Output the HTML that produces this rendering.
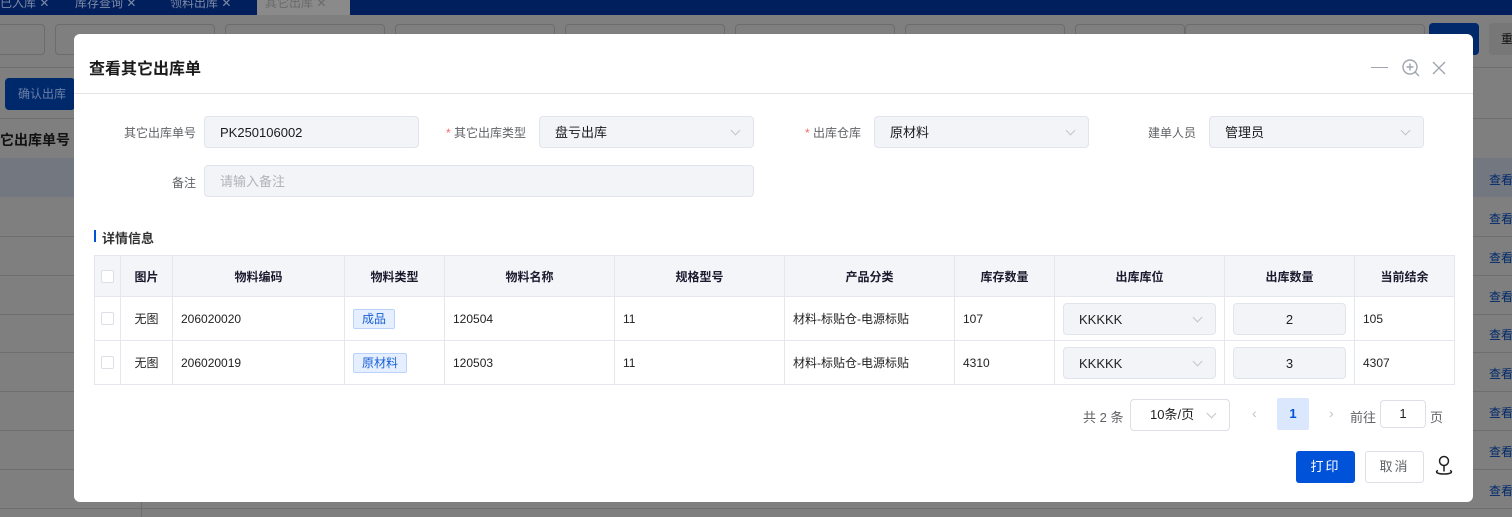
<!DOCTYPE html>
<html><head><meta charset="utf-8"><style>
*{box-sizing:border-box;margin:0;padding:0}
html{width:1512px;height:517px;overflow:hidden}
body{width:1512px;height:517px;overflow:hidden;background:#7f7f7f;font-family:"Liberation Sans","Noto Sans CJK SC",sans-serif;font-size:12px;color:#1f1f1f;position:relative}
.a{position:absolute}
.top{left:0;top:0;width:1512px;height:15px;background:#001f5c}
.tab{top:0;height:15px;color:#7d8aa8;font-size:12px;line-height:6px;overflow:hidden;white-space:nowrap}
.bgl{left:0;width:1512px;height:1px;background:#6e6e6e}
.bginp{top:24px;height:31px;border:1px solid #6c6c6c;border-radius:4px;background:#7f7f7f}
.dlg{left:74px;top:34px;width:1399px;height:468px;background:#fff;border-radius:6px}
.title{left:15px;top:21px;font-size:16px;font-weight:bold;color:#1a1a1a}
.hr{left:0;top:59px;width:1399px;height:1px;background:#e2e4e8}
.lbl{font-size:12px;color:#606266;text-align:right;width:100px}
.req{color:#f56c6c}
.inp{height:32px;background:#f3f4f8;border:1px solid #e1e4ec;border-radius:4px;font-size:13px;padding-left:15px;line-height:32px;color:#1a1a1a}
.chev{position:absolute;right:14px;top:10px;width:7px;height:7px;border-right:1px solid #c0c4cc;border-bottom:1px solid #c0c4cc;transform:rotate(45deg)}
table{border-collapse:collapse;position:absolute;left:20px;top:221px;width:1360px;table-layout:fixed}
td,th{border:1px solid #e4e7ed;font-size:12px;padding:0 8px}
th{background:#f4f5f9;height:41px;font-weight:bold;color:#1a1a2e;text-align:center}
td{height:44px}
.cb{width:13px;height:13px;border:1px solid #dcdfe6;border-radius:2px;background:#fff;margin:auto}
.tag{display:inline-block;border:1px solid #b9d3fb;background:#e6efff;color:#1760d4;font-size:12px;padding:0 8px;line-height:18px;border-radius:2px}
.cin{height:32px;background:#f3f4f8;border:1px solid #e1e4ec;border-radius:4px;position:relative;line-height:32px;font-size:13px}
.lk{left:1489px;color:#00296b;white-space:nowrap;font-size:12px}
</style></head><body>
<div class="a top"></div>
<div class="a tab" style="left:0;width:55px">已入库 ✕</div>
<div class="a tab" style="left:75px">库存查询 ✕</div>
<div class="a tab" style="left:170px">领料出库 ✕</div>
<div class="a" style="left:257px;top:0;width:93px;height:15px;background:#8a8a8a;color:#6a6a6a;line-height:6px;padding-left:8px;white-space:nowrap;overflow:hidden">其它出库 ✕</div>
<div class="a bginp" style="left:-5px;width:50px"></div>
<div class="a bginp" style="left:55px;width:160px"></div>
<div class="a bginp" style="left:225px;width:160px"></div>
<div class="a bginp" style="left:395px;width:160px"></div>
<div class="a bginp" style="left:565px;width:160px"></div>
<div class="a bginp" style="left:735px;width:160px"></div>
<div class="a bginp" style="left:905px;width:160px"></div>
<div class="a bginp" style="left:1075px;width:110px"></div>
<div class="a bginp" style="left:1185px;width:240px"></div>
<div class="a" style="left:1429px;top:23px;width:50px;height:32px;background:#00296b;border-radius:4px"></div>
<div class="a" style="left:1489px;top:23px;width:30px;height:32px;background:#777;border-radius:4px;color:#111;line-height:32px;padding-left:12px;white-space:nowrap;overflow:hidden">重</div>
<div class="a bgl" style="top:67px"></div>
<div class="a" style="left:5px;top:78px;width:70px;height:32px;background:#00296b;border-radius:4px;color:#6a7fa8;line-height:32px;padding-left:13px;white-space:nowrap">确认出库</div>
<div class="a bgl" style="top:118px"></div>
<div class="a" style="left:0;top:130px;font-size:14px;font-weight:bold;color:#111;white-space:nowrap">它出库单号</div>
<div class="a" style="left:0;top:158px;width:1512px;height:39px;background:#737780"></div>
<div class="a bgl" style="top:236px"></div><div class="a bgl" style="top:275px"></div><div class="a bgl" style="top:314px"></div><div class="a bgl" style="top:352px"></div><div class="a bgl" style="top:391px"></div><div class="a bgl" style="top:430px"></div><div class="a bgl" style="top:469px"></div><div class="a bgl" style="top:508px"></div>
<div class="a" style="left:141px;top:502px;width:1px;height:15px;background:#6e6e6e"></div>
<div class="a lk" style="top:171px">查看</div><div class="a lk" style="top:210px">查看</div><div class="a lk" style="top:249px">查看</div><div class="a lk" style="top:288px">查看</div><div class="a lk" style="top:326px">查看</div><div class="a lk" style="top:365px">查看</div><div class="a lk" style="top:404px">查看</div><div class="a lk" style="top:443px">查看</div><div class="a lk" style="top:482px">查看</div>

<div class="a dlg">
<div class="a title">查看其它出库单</div>
<div class="a" style="left:1297px;top:33px;width:17px;height:1px;background:#a0a4ad"></div>
<svg class="a" style="left:1327px;top:24px" width="20" height="20" viewBox="0 0 20 20" fill="none" stroke="#a0a4ad" stroke-width="1.4"><circle cx="9" cy="9" r="7"/><path d="M9 5.5v7M5.5 9h7M14 14l4 4"/></svg>
<svg class="a" style="left:1358px;top:27px" width="14" height="14" viewBox="0 0 14 14" stroke="#a0a4ad" stroke-width="1.3"><path d="M1 1l12 12M13 1L1 13"/></svg>
<div class="a hr"></div>

<div class="a lbl" style="left:22px;top:90px">其它出库单号</div>
<div class="a inp" style="left:130px;top:82px;width:215px">PK250106002</div>
<div class="a lbl" style="left:352px;top:90px"><span class="req">*</span> 其它出库类型</div>
<div class="a inp" style="left:465px;top:82px;width:215px">盘亏出库<i class="chev"></i></div>
<div class="a lbl" style="left:687px;top:90px"><span class="req">*</span> 出库仓库</div>
<div class="a inp" style="left:800px;top:82px;width:215px">原材料<i class="chev"></i></div>
<div class="a lbl" style="left:1022px;top:90px">建单人员</div>
<div class="a inp" style="left:1135px;top:82px;width:215px">管理员<i class="chev"></i></div>
<div class="a lbl" style="left:22px;top:140px">备注</div>
<div class="a inp" style="left:130px;top:131px;width:550px;color:#b0b3ba">请输入备注</div>

<div class="a" style="left:20px;top:196px;width:2px;height:12px;background:#0052d9"></div>
<div class="a" style="left:28px;top:194px;font-size:13px;font-weight:bold;color:#333">详情信息</div>

<table>
<colgroup><col style="width:26px"><col style="width:52px"><col style="width:172px"><col style="width:100px"><col style="width:170px"><col style="width:170px"><col style="width:170px"><col style="width:100px"><col style="width:170px"><col style="width:130px"><col style="width:100px"></colgroup>
<tr><th style="padding:0"><div class="cb"></div></th><th>图片</th><th>物料编码</th><th>物料类型</th><th>物料名称</th><th>规格型号</th><th>产品分类</th><th>库存数量</th><th>出库库位</th><th>出库数量</th><th>当前结余</th></tr>
<tr><td style="padding:0"><div class="cb"></div></td><td style="text-align:center">无图</td><td>206020020</td><td><span class="tag">成品</span></td><td>120504</td><td>11</td><td>材料-标贴仓-电源标贴</td><td>107</td><td><div class="cin" style="padding-left:15px">KKKKK<i class="chev"></i></div></td><td><div class="cin" style="text-align:center">2</div></td><td>105</td></tr>
<tr><td style="padding:0"><div class="cb"></div></td><td style="text-align:center">无图</td><td>206020019</td><td><span class="tag">原材料</span></td><td>120503</td><td>11</td><td>材料-标贴仓-电源标贴</td><td>4310</td><td><div class="cin" style="padding-left:15px">KKKKK<i class="chev"></i></div></td><td><div class="cin" style="text-align:center">3</div></td><td>4307</td></tr>
</table>

<div class="a" style="left:1009px;top:373px;font-size:13px;color:#606266">共 2 条</div>
<div class="a" style="left:1056px;top:365px;width:100px;height:32px;border:1px solid #dcdfe6;border-radius:4px;font-size:13px;line-height:30px;padding-left:19px">10条/页<i class="chev" style="top:10px"></i></div>
<div class="a" style="left:1178px;top:371px;color:#c0c4cc;font-size:14px">‹</div>
<div class="a" style="left:1203px;top:364px;width:32px;height:32px;background:#dbe7fd;color:#0052d9;font-weight:bold;font-size:13px;text-align:center;line-height:32px;border-radius:2px">1</div>
<div class="a" style="left:1255px;top:371px;color:#c0c4cc;font-size:14px">›</div>
<div class="a" style="left:1276px;top:373px;font-size:13px;color:#606266">前往</div>
<div class="a" style="left:1306px;top:366px;width:46px;height:28px;border:1px solid #dcdfe6;border-radius:4px;text-align:center;line-height:26px;font-size:13px">1</div>
<div class="a" style="left:1356px;top:373px;font-size:13px;color:#606266">页</div>

<div class="a" style="left:1222px;top:417px;width:59px;height:32px;background:#0052d9;border-radius:3px;color:#fff;text-align:center;line-height:32px;font-size:13px;letter-spacing:2px">打印</div>
<div class="a" style="left:1291px;top:417px;width:59px;height:32px;border:1px solid #dcdfe6;border-radius:3px;color:#606266;text-align:center;line-height:30px;font-size:13px;letter-spacing:2px">取消</div>
<svg class="a" style="left:1361px;top:420px" width="18" height="24" viewBox="0 0 18 24" fill="none" stroke="#222" stroke-width="1.5"><circle cx="9" cy="7" r="4.5"/><path d="M9 11.5v6M3 16.5c-3 1-2 3.5 6 3.5s9-2.5 6-3.5"/></svg>
</div>
</body></html>
